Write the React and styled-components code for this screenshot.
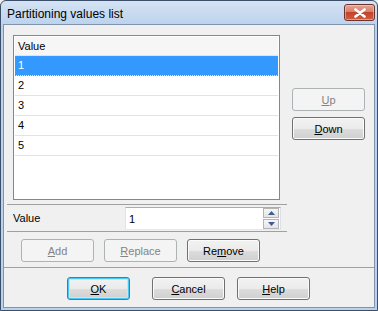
import React from 'react';
import styled, { createGlobalStyle } from 'styled-components';

const values = ['1', '2', '3', '4', '5'];

const GlobalStyle = createGlobalStyle`
  html, body {
    margin: 0;
    padding: 0;
    background: #f0f0f0;
  }
  body {
    font-family: "Liberation Sans", Arial, sans-serif;
    font-size: 11px;
    color: #000;
  }
`;

const Button = ({ label, accessKey, disabled, isDefault, width = 73, trail = 0 }) => {
  const idx = label.indexOf(accessKey);
  return (
    <PushButton disabled={disabled} $default={isDefault} $width={width} $trail={trail}>
      {label.slice(0, idx)}
      <u>{accessKey}</u>
      {label.slice(idx + accessKey.length)}
    </PushButton>
  );
};

const App = () => (
  <>
    <GlobalStyle />
    <Window>
      <TitleBar>
        <Title>Partitioning values list</Title>
        <CloseButton aria-label="Close">
          <svg width="12" height="10" viewBox="0 0 12 10">
            <path
              d="M1.5 1.5 L10.5 8.5 M10.5 1.5 L1.5 8.5"
              stroke="#ffffff"
              strokeWidth="2.6"
              strokeLinecap="round"
            />
          </svg>
        </CloseButton>
      </TitleBar>
      <Client>
        <TopSection>
          <ListBox>
            <ListHeader>Value</ListHeader>
            {values.map((v, i) => (
              <ListRow key={v} $selected={i === 0}>{v}</ListRow>
            ))}
          </ListBox>
          <SideButtons>
            <Button label="Up" accessKey="U" disabled />
            <Button label="Down" accessKey="D" />
          </SideButtons>
        </TopSection>
        <Separator $inset $top={4} />
        <ValueRow>
          <FieldLabel>Value</FieldLabel>
          <SpinEdit>
            <SpinInput>1</SpinInput>
            <SpinButtons>
              <SpinButton>
                <svg width="7" height="4" viewBox="0 0 7 4">
                  <path d="M0 4 L3.5 0 L7 4 Z" fill="#3e5c8c" />
                </svg>
              </SpinButton>
              <SpinButton>
                <svg width="7" height="4" viewBox="0 0 7 4">
                  <path d="M0 0 L3.5 4 L7 0 Z" fill="#3e5c8c" />
                </svg>
              </SpinButton>
            </SpinButtons>
          </SpinEdit>
        </ValueRow>
        <Separator $inset $top={0} />
        <EditButtons>
          <Button label="Add" accessKey="A" disabled />
          <Button label="Replace" accessKey="R" disabled />
          <Button label="Remove" accessKey="m" />
        </EditButtons>
        <Separator $top={5} />
        <DialogButtons>
          <Button label="OK" accessKey="O" isDefault width={63} trail={10} />
          <Button label="Cancel" accessKey="C" />
          <Button label="Help" accessKey="H" />
        </DialogButtons>
      </Client>
    </Window>
  </>
);

const Window = styled.div`
  box-sizing: border-box;
  width: 378px;
  height: 311px;
  display: flex;
  flex-direction: column;
  border: 1px solid #3b4f6b;
  border-radius: 6px 6px 0 0;
  padding: 0 2px 2px 2px;
  background: linear-gradient(#d5e3f4 0px, #bcd2ec 24px, #bad1ec 100%);
  overflow: hidden;
`;

const TitleBar = styled.div`
  height: 23px;
  display: flex;
  align-items: flex-start;
  justify-content: space-between;
`;

const Title = styled.div`
  font-size: 12px;
  line-height: 14px;
  padding: 6px 0 0 4px;
  color: #000;
`;

const CloseButton = styled.div`
  box-sizing: border-box;
  width: 31px;
  height: 17px;
  margin: 3px 0 0 0;
  display: flex;
  align-items: center;
  justify-content: center;
  border: 1px solid #6b3330;
  border-radius: 3px;
  background: linear-gradient(#e7a593 0%, #d6806b 45%, #c3432a 50%, #d25c3e 100%);
  box-shadow: inset 0 0 0 1px rgba(255, 220, 210, 0.5);
`;

const Client = styled.div`
  flex: 1;
  display: flex;
  flex-direction: column;
  background: #f0f0f0;
  border: 1px solid #8094ae;
`;

const TopSection = styled.div`
  display: flex;
  padding: 10px 0 0 9px;
  gap: 12px;
`;

const ListBox = styled.div`
  box-sizing: border-box;
  width: 267px;
  height: 165px;
  border: 1px solid #828790;
  background: #fff;
  padding: 1px;
`;

const ListHeader = styled.div`
  height: 18px;
  line-height: 18px;
  padding-left: 3px;
  background: #f6f6f6;
  border-bottom: 1px solid #e3e3e3;
`;

const ListRow = styled.div`
  box-sizing: border-box;
  height: 20px;
  line-height: 18px;
  padding-left: 3px;
  border-bottom: 1px solid #e3e3e3;
  background: ${(p) => (p.$selected ? '#3399ff' : '#fff')};
  color: ${(p) => (p.$selected ? '#fff' : '#000')};
  outline: ${(p) => (p.$selected ? '1px dotted #c67f2a' : 'none')};
  outline-offset: -1px;
`;

const SideButtons = styled.div`
  display: flex;
  flex-direction: column;
  gap: 6px;
  padding-top: 53px;
`;

const Separator = styled.div`
  flex: none;
  height: 1px;
  background: #a0a0a0;
  margin-top: ${(p) => p.$top}px;
  margin-left: ${(p) => (p.$inset ? 3 : 0)}px;
  margin-right: ${(p) => (p.$inset ? 87 : 0)}px;
`;

const ValueRow = styled.div`
  display: flex;
  align-items: center;
  height: 26px;
  padding-left: 9px;
`;

const FieldLabel = styled.div`
  width: 112px;
`;

const SpinEdit = styled.div`
  box-sizing: border-box;
  width: 156px;
  height: 23px;
  display: flex;
  align-items: center;
  justify-content: space-between;
  border: 1px solid #abadb3;
  border-bottom-color: #e3e9ef;
  border-left-color: #e2e3ea;
  border-right-color: #dbdfe6;
  background: #fff;
  margin-top: 1px;
`;

const SpinInput = styled.div`
  padding-left: 3px;
`;

const SpinButtons = styled.div`
  display: flex;
  flex-direction: column;
  gap: 1px;
  padding-right: 1px;
`;

const SpinButton = styled.div`
  box-sizing: border-box;
  width: 16px;
  height: 10px;
  display: flex;
  align-items: center;
  justify-content: center;
  border: 1px solid #b4b4b4;
  background: linear-gradient(#f6f6f6, #e4e4e4);
`;

const EditButtons = styled.div`
  display: flex;
  gap: 10px;
  padding: 7px 0 0 17px;
`;

const DialogButtons = styled.div`
  display: flex;
  gap: 12px;
  padding: 9px 0 0 63px;
`;

const PushButton = styled.div`
  box-sizing: border-box;
  width: ${(p) => p.$width}px;
  margin-right: ${(p) => p.$trail}px;
  height: 23px;
  display: flex;
  align-items: center;
  justify-content: center;
  border-radius: 3px;
  border: 1px solid ${(p) => (p.disabled ? '#adb2b5' : p.$default ? '#3c7fb1' : '#707070')};
  background: ${(p) => (p.disabled
    ? '#f4f4f4'
    : 'linear-gradient(#f2f2f2 0%, #ebebeb 50%, #dddddd 51%, #cfcfcf 100%)')};
  box-shadow: ${(p) => (p.$default
    ? 'inset 0 0 0 1px #48c8f4, inset 0 0 0 2px #bdeafa'
    : p.disabled ? 'none' : 'inset 0 0 0 1px #fbfbfb')};
  color: ${(p) => (p.disabled ? '#838383' : '#000')};
  u {
    text-decoration-thickness: 1px;
    text-underline-offset: 1px;
  }
`;

export default App;
